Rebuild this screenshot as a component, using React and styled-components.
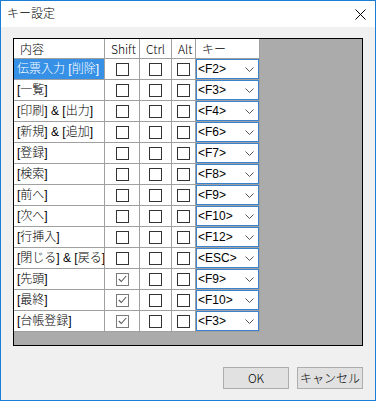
import React from "react";
import styled, { createGlobalStyle } from "styled-components";

const Global = createGlobalStyle`
  html, body { margin: 0; padding: 0; background: #ffffff; }
  * { box-sizing: border-box; }
  body {
    font-family: "Liberation Sans", "Noto Sans CJK JP", sans-serif;
    font-size: 12px;
    font-weight: 300;
    color: #000;
  }
`;

const Window = styled.div`
  width: 376px;
  height: 401px;
  border: 1px solid #1a7fd4;
  display: flex;
  flex-direction: column;
  background: #f0f0f0;
`;

const TitleBar = styled.div`
  height: 26px;
  flex: none;
  background: #ffffff;
  display: flex;
  align-items: center;
  justify-content: space-between;
  padding: 0 9px 0 6px;
`;

const Title = styled.span`
  font-size: 12px;
  line-height: 14px;
  color: #000;
`;

const CloseIcon = styled.svg`
  display: block;
  width: 11px;
  height: 11px;
`;

const Client = styled.div`
  flex: 1;
  display: flex;
  flex-direction: column;
  padding: 11px 12px 11px 12px;
`;

const GridPanel = styled.div`
  height: 308px;
  flex: none;
  border: 1px solid #000;
  background: #ababab;
  display: flex;
  align-items: flex-start;
`;

const Table = styled.div`
  display: grid;
  grid-template-columns: 91px 35px 32px 24px 64px;
  grid-template-rows: 20px;
  grid-auto-rows: 21px;
`;

const Cell = styled.div`
  background: ${(p) => (p.$selected ? "#3590e6" : "#ffffff")};
  color: ${(p) => (p.$selected ? "#ffffff" : "#000000")};
  border-right: 1px solid #a0a0a0;
  border-bottom: 1px solid #a0a0a0;
  display: flex;
  align-items: center;
  justify-content: ${(p) => (p.$center ? "center" : "flex-start")};
  padding-left: ${(p) => (p.$center ? 0 : p.$header ? 6 : 3)}px;
  font-family: ${(p) =>
    p.$header ? '"Noto Sans CJK JP", sans-serif' : '"Liberation Sans", "Noto Sans CJK JP", sans-serif'};
  font-size: 12px;
  line-height: 14px;
  white-space: pre;
  overflow: hidden;
`;

const KeyCell = styled.div`
  border-right: 1px solid #a0a0a0;
  border-bottom: 1px solid #a0a0a0;
  display: flex;
`;

const Combo = styled.div`
  flex: 1;
  background: #fff;
  border: 1px solid #3a84cf;
  display: flex;
  align-items: center;
  justify-content: space-between;
  padding: 0 4px 0 1px;
  font-size: 12px;
  line-height: 14px;
`;

const Chevron = styled.svg`
  display: block;
  width: 9px;
  height: 5px;
`;

const Box = styled.div`
  width: 13px;
  height: 13px;
  background: #fff;
  border: 1px solid ${(p) => (p.$checked ? "#7a7a7a" : "#333333")};
  display: flex;
  align-items: center;
  justify-content: center;
`;

const Buttons = styled.div`
  margin-top: 21px;
  display: flex;
  justify-content: flex-end;
  gap: 8px;
`;

const Button = styled.div`
  width: 66px;
  height: 22px;
  background: #e1e1e1;
  border: 1px solid #adadad;
  display: flex;
  align-items: center;
  justify-content: center;
  font-family: "Noto Sans CJK JP", sans-serif;
  font-size: 12px;
  line-height: 14px;
`;

const rows = [
  ["伝票入力 [削除]", false, "<F2>"],
  ["[一覧]", false, "<F3>"],
  ["[印刷] & [出力]", false, "<F4>"],
  ["[新規] & [追加]", false, "<F6>"],
  ["[登録]", false, "<F7>"],
  ["[検索]", false, "<F8>"],
  ["[前へ]", false, "<F9>"],
  ["[次へ]", false, "<F10>"],
  ["[行挿入]", false, "<F12>"],
  ["[閉じる] & [戻る]", false, "<ESC>"],
  ["[先頭]", true, "<F9>"],
  ["[最終]", true, "<F10>"],
  ["[台帳登録]", true, "<F3>"],
];

function CheckBox({ checked }) {
  return (
    <Box $checked={checked}>
      {checked && (
        <svg width="9" height="8" viewBox="0 0 9 8">
          <polyline points="0.8,4 3.3,6.5 8.2,1" fill="none" stroke="#5a5a5a" strokeWidth="1.1" />
        </svg>
      )}
    </Box>
  );
}

export default function App() {
  return (
    <>
      <Global />
      <Window>
        <TitleBar>
          <Title>キー設定</Title>
          <CloseIcon viewBox="0 0 11 11">
            <line x1="0.5" y1="0.5" x2="10.5" y2="10.5" stroke="#000" strokeWidth="1" />
            <line x1="10.5" y1="0.5" x2="0.5" y2="10.5" stroke="#000" strokeWidth="1" />
          </CloseIcon>
        </TitleBar>
        <Client>
          <GridPanel>
            <Table>
              <Cell $header>内容</Cell>
              <Cell $header>Shift</Cell>
              <Cell $header>Ctrl</Cell>
              <Cell $header>Alt</Cell>
              <Cell $header>キー</Cell>
              {rows.map(([label, shift, key], i) => (
                <React.Fragment key={i}>
                  <Cell $selected={i === 0}>{label}</Cell>
                  <Cell $center><CheckBox checked={shift} /></Cell>
                  <Cell $center><CheckBox checked={false} /></Cell>
                  <Cell $center><CheckBox checked={false} /></Cell>
                  <KeyCell>
                    <Combo>
                      <span>{key}</span>
                      <Chevron viewBox="0 0 9 5">
                        <polyline points="0.5,0.5 4.5,4.5 8.5,0.5" fill="none" stroke="#555" strokeWidth="1" />
                      </Chevron>
                    </Combo>
                  </KeyCell>
                </React.Fragment>
              ))}
            </Table>
          </GridPanel>
          <Buttons>
            <Button>OK</Button>
            <Button>キャンセル</Button>
          </Buttons>
        </Client>
      </Window>
    </>
  );
}
